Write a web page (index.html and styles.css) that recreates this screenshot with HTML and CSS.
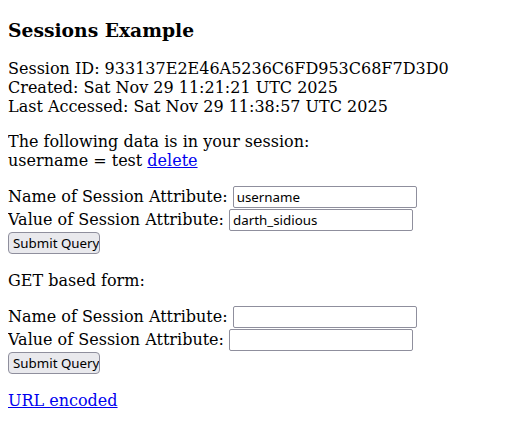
FILE: index.html
```html
<!DOCTYPE html>
<html>
<head>
<meta charset="utf-8">
<title>Sessions Example</title>
<link rel="stylesheet" href="styles.css">
</head>
<body class="page">
<h3 class="title">Sessions Example</h3>
Session ID: 933137E2E46A5236C6FD953C68F7D3D0<br>
Created: Sat Nov 29 11:21:21 UTC 2025<br>
Last Accessed: Sat Nov 29 11:38:57 UTC 2025<br>
<p class="block">
The following data is in your session:<br>
username = test <a class="link" href="#">delete</a><br>
</p>
<form class="block form" action="#" method="post">
Name of Session Attribute:
<input class="field" type="text" size="20" name="dataname" value="username">
<br>
Value of Session Attribute:
<input class="field" type="text" size="20" name="datavalue" value="darth_sidious">
<br>
<input class="submit" type="submit" value="Submit Query">
</form>
<p class="block">GET based form:<br></p>
<form class="block form" action="#" method="get">
Name of Session Attribute:
<input class="field" type="text" size="20" name="dataname">
<br>
Value of Session Attribute:
<input class="field" type="text" size="20" name="datavalue">
<br>
<input class="submit" type="submit" value="Submit Query">
</form>
<p class="block"><a class="link" href="#">URL encoded</a></p>
</body>
</html>
```

FILE: styles.css
```css
.page {
  margin: 0 8px 8px;
  font-family: "DejaVu Serif", serif;
  font-size: 16px;
  line-height: 19px;
  color: #000;
  background: #fff;
}
.title {
  font-size: 18.72px;
  line-height: 22px;
  font-weight: bold;
  margin: 18.72px 0;
}
.block {
  margin: 16px 0;
}
.form {
  line-height: 21px;
}
.link {
  color: #0000ee;
  text-decoration: underline;
}
.field {
  box-sizing: border-box;
  width: 184px;
  height: 22px;
  margin: 0 0 1px;
  padding: 1px 3px;
  border: 1px solid #8f8f9d;
  border-radius: 2px;
  background: #fff;
  color: #000;
  font-family: "Noto Sans", "Open Sans", sans-serif;
  font-size: 13.33px;
  line-height: normal;
  vertical-align: top;
}
.submit {
  box-sizing: border-box;
  width: 92px;
  height: 22px;
  margin: 0 0 1px;
  padding: 1px 4px;
  border: 1px solid #8f8f9d;
  border-radius: 4px;
  background: #e9e9ed;
  color: #000;
  font-family: "Noto Sans", "Open Sans", sans-serif;
  font-size: 13.33px;
  line-height: normal;
  vertical-align: top;
}
```
